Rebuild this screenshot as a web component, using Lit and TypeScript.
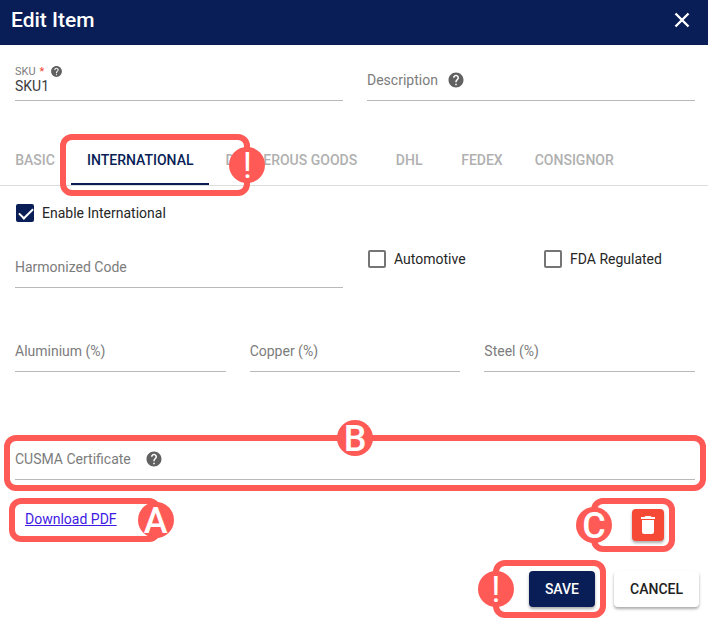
import { LitElement, html, css, svg } from "lit";
import { customElement, property } from "lit/decorators.js";

const HELP = svg`<path fill="currentColor" d="M12 2C6.48 2 2 6.48 2 12s4.48 10 10 10 10-4.48 10-10S17.52 2 12 2zm1 17h-2v-2h2v2zm2.07-7.75l-.9.92C13.45 12.9 13 13.5 13 15h-2v-.5c0-1.1.45-2.1 1.17-2.83l1.24-1.26c.37-.36.59-.86.59-1.41 0-1.1-.9-2-2-2s-2 .9-2 2H8c0-2.21 1.79-4 4-4s4 1.79 4 4c0 .88-.36 1.68-.93 2.25z"/>`;

/** Text input with an underline; the label sits inside until there is a value. */
@customElement("line-field")
class LineField extends LitElement {
  @property() label = "";
  @property() value = "";
  @property({ type: Boolean }) required = false;
  @property({ type: Boolean }) help = false;

  static styles = css`
    :host { display: block; }
    * { box-sizing: border-box; }
    .field {
      display: grid;
      height: 36px;
      border-bottom: 1px solid #b9b9b9;
    }
    label {
      grid-area: 1 / 1;
      display: flex;
      align-items: center;
      gap: 9px;
      height: 30px;
      line-height: 20px;
      color: #7c7c7c;
      pointer-events: none;
    }
    :host([wide]) label { gap: 14px; }
    input {
      grid-area: 1 / 1;
      min-width: 0;
      border: 0;
      padding: 11px 0 5px;
      font: inherit;
      color: #3c3c3c;
      background: none;
      outline: none;
    }
    .filled label {
      height: 13px;
      gap: 4px;
      font-size: 11px;
      line-height: 13px;
    }
    .filled svg { width: 13px; height: 13px; margin-left: 2px; }
    .star { color: #f44336; }
    svg { width: 18px; height: 18px; color: #616161; }
  `;

  render() {
    return html`<div class="field ${this.value ? "filled" : ""}">
      <label for="box">${this.label}${this.required ? html`<span class="star">*</span>` : ""}
        ${this.help ? html`<svg viewBox="0 0 24 24" aria-hidden="true">${HELP}</svg>` : ""}
      </label>
      <input id="box" .value=${this.value} ?required=${this.required} />
    </div>`;
  }
}

@customElement("app-root")
class AppRoot extends LitElement {
  static styles = css`
    :host {
      display: block;
      font: 14px/20px Roboto, "Liberation Sans", sans-serif;
      color: #262626;
      background: #fff;
    }
    * { box-sizing: border-box; }
    button { font: inherit; cursor: pointer; border: 0; }
    header {
      display: flex;
      align-items: center;
      justify-content: space-between;
      height: 45px;
      padding: 0 14px 5px 11px;
      background: #091e56;
      color: #fff;
    }
    h1 { margin: 0; font-size: 21px; line-height: 24px; font-weight: 500; }
    .close { display: flex; padding: 0; background: none; color: inherit; }
    .close svg { width: 24px; height: 24px; }
    .row { display: grid; gap: 24px; padding: 0 13px 0 15px; }
    .two { grid-template-columns: 1fr 1fr; }
    .three { grid-template-columns: 1fr 1fr 1fr; }
    .identity { padding-top: 20px; }
    .tabs {
      display: flex;
      margin: 34px 0 0 -1px;
      border-bottom: 1px solid #dcdcdc;
    }
    .tab {
      min-width: 72px;
      height: 50px;
      padding: 0 16px;
      background: none;
      color: #b0b0b0;
      font-weight: 500;
      white-space: nowrap;
    }
    .tab.active {
      color: #091e56;
      box-shadow: inset 0 -2px #091e56;
    }
    .check { display: flex; align-items: center; gap: 8px; height: 20px; }
    .check input {
      appearance: none;
      display: grid;
      flex: none;
      width: 18px;
      height: 18px;
      margin: 0 0 0 1px;
      border: 2px solid #757575;
      border-radius: 2px;
    }
    .check input:checked {
      border-color: #091e56;
      background: #091e56;
    }
    .check input:checked::before {
      content: "";
      width: 12px;
      height: 6px;
      margin: 2px 0 0 1px;
      border: solid #fff;
      border-width: 0 0 2px 2px;
      rotate: -45deg;
    }
    .enable { padding-top: 17px; }
    .codes { padding-top: 29px; }
    .options {
      display: grid;
      grid-template: 14px / 1fr 1fr;
      gap: 24px;
      align-items: center;
    }
    .metals { padding-top: 48px; }
    .cusma { padding-top: 72px; }
    .call { position: relative; }
    .ring {
      position: absolute;
      border: 6px solid #ff5a56;
      border-radius: 12px;
      pointer-events: none;
    }
    .badge {
      position: absolute;
      display: grid;
      place-items: center;
      width: 36px;
      height: 36px;
      padding-top: 1px;
      border-radius: 50%;
      background: #ff5a56;
      color: #fff;
      font-size: 36px;
      line-height: 36px;
      font-weight: 500;
    }
    .on-tab { inset: -1px -41px -11px -11px; }
    .on-tab .badge { right: -21px; top: 7px; }
    .on-cusma { inset: -9px -11px -11px; }
    .on-cusma .badge { left: calc(50% - 18px); top: -21px; }
    .on-link { inset: -11px -44px -13px -16px; }
    .on-link .badge { right: -19px; top: -2px; }
    .on-trash { inset: -11px -11px -11px -41px; }
    .on-trash .badge { left: -21px; top: 3px; }
    .on-save { inset: -11px -11px -11px -36px; }
    .on-save .badge { left: -21px; top: 5px; }
    .on-tab .badge, .on-save .badge { font-weight: 400; }
    .files {
      display: flex;
      justify-content: space-between;
      padding: 29px 44px 0 25px;
    }
    .link { align-self: flex-start; }
    a { color: #3f1ae4; }
    .trash {
      display: grid;
      place-items: center;
      width: 32px;
      height: 32px;
      padding: 0;
      border-radius: 4px;
      background: #f64936;
      color: #fff;
      box-shadow: 0 2px 3px #0005;
    }
    .trash svg { width: 24px; height: 24px; }
    footer {
      display: flex;
      justify-content: flex-end;
      gap: 19px;
      padding: 30px 9px 19px;
    }
    .action {
      height: 36px;
      padding: 0 16px;
      border-radius: 4px;
      background: #fff;
      color: #212121;
      font-weight: 500;
      box-shadow: 0 2px 3px #0005;
    }
    .primary { background: #091e56; color: #fff; }
  `;

  private mark(name: string, text: string) {
    return html`<span class="ring ${name}" aria-hidden="true"><span class="badge">${text}</span></span>`;
  }

  private check(label: string, on = false) {
    return html`<label class="check"><input type="checkbox" ?checked=${on} />${label}</label>`;
  }

  render() {
    const tabs = ["BASIC", "INTERNATIONAL", "DANGEROUS GOODS", "DHL", "FEDEX", "CONSIGNOR"];
    return html`
      <header>
        <h1>Edit Item</h1>
        <button class="close" aria-label="Close">
          <svg viewBox="0 0 24 24"><path d="M5.5 5.5l13 13M18.5 5.5l-13 13" stroke="currentColor" stroke-width="2.4" /></svg>
        </button>
      </header>
      <main>
        <div class="row two identity">
          <line-field label="SKU" value="SKU1" required help></line-field>
          <line-field label="Description" help></line-field>
        </div>
        <nav class="tabs" role="tablist">
          ${tabs.map((t, i) =>
            i === 1
              ? html`<div class="call">
                  <button class="tab active" role="tab" aria-selected="true">${t}</button>${this.mark("on-tab", "!")}
                </div>`
              : html`<button class="tab" role="tab" aria-selected="false">${t}</button>`
          )}
        </nav>
        <div class="row enable">${this.check("Enable International", true)}</div>
        <div class="row two codes">
          <line-field label="Harmonized Code"></line-field>
          <div class="options">${this.check("Automotive")}${this.check("FDA Regulated")}</div>
        </div>
        <div class="row three metals">
          <line-field label="Aluminium (%)"></line-field>
          <line-field label="Copper (%)"></line-field>
          <line-field label="Steel (%)"></line-field>
        </div>
        <div class="row cusma">
          <div class="call"><line-field label="CUSMA Certificate" help wide></line-field>${this.mark("on-cusma", "B")}</div>
        </div>
        <div class="files">
          <div class="call link"><a href="#pdf">Download PDF</a>${this.mark("on-link", "A")}</div>
          <div class="call">
            <button class="trash" aria-label="Delete">
              <svg viewBox="0 0 24 24"><path fill="currentColor" d="M6 19c0 1.1.9 2 2 2h8c1.1 0 2-.9 2-2V7H6v12zM19 4h-3.5l-1-1h-5l-1 1H5v2h14V4z" /></svg>
            </button>
            ${this.mark("on-trash", "C")}
          </div>
        </div>
      </main>
      <footer>
        <div class="call"><button class="action primary">SAVE</button>${this.mark("on-save", "!")}</div>
        <button class="action">CANCEL</button>
      </footer>
    `;
  }
}
